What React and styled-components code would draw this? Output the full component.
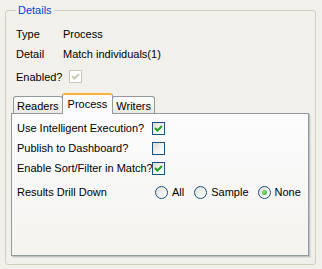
import React, { useState } from 'react';
import styled, { createGlobalStyle } from 'styled-components';

const GlobalStyle = createGlobalStyle`
  html, body {
    margin: 0;
    padding: 0;
    background: #f1f0ea;
  }
  body {
    font-family: "Liberation Sans", Arial, sans-serif;
    font-size: 11px;
    color: #000;
  }
`;

const Page = styled.div`
  width: 322px;
  height: 269px;
  box-sizing: border-box;
  padding: 4px 6px 3px 5px;
`;

const GroupBox = styled.fieldset`
  margin: 0;
  min-width: 0;
  height: 261px;
  box-sizing: border-box;
  border: 1px solid #d0d0bf;
  border-radius: 3px;
  padding: 11px 3px 5px 5px;
  display: flex;
  flex-direction: column;
`;

const Legend = styled.legend`
  color: #0046d5;
  padding: 0 2px;
  margin-left: 5px;
  line-height: 13px;
`;

const InfoGrid = styled.div`
  display: grid;
  grid-template-columns: 47px auto;
  row-gap: 7px;
  padding-left: 5px;
  line-height: 13px;
`;

const EnabledRow = styled.div`
  display: flex;
  align-items: center;
  padding-left: 5px;
  margin-top: 9px;
  height: 13px;
`;

const EnabledLabel = styled.span`
  width: 53px;
`;

const Box = styled.span`
  width: 13px;
  height: 13px;
  box-sizing: border-box;
  display: inline-flex;
  align-items: center;
  justify-content: center;
  flex-shrink: 0;
  border: 1px solid ${(p) => (p.disabled ? '#cac8bb' : '#1c5180')};
  background: ${(p) =>
    p.disabled ? '#ffffff' : 'linear-gradient(135deg, #dcdcd7 0%, #f4f4f0 60%, #ffffff 100%)'};
`;

const Tabs = styled.div`
  margin-top: 10px;
  display: flex;
  flex-direction: column;
  flex: 1;
`;

const TabStrip = styled.div`
  display: flex;
  align-items: flex-end;
  height: 20px;
  padding-left: 2px;
  position: relative;
  z-index: 1;
`;

const Tab = styled.div`
  box-sizing: border-box;
  height: ${(p) => (p.active ? '21px' : '17px')};
  padding: ${(p) => (p.active ? '0 5px 2px' : '1px 3px 0')};
  margin: ${(p) => (p.active ? '0 -1px -1px -1px' : '0')};
  display: flex;
  align-items: center;
  border: 1px solid #919b9c;
  border-bottom: none;
  border-top: ${(p) => (p.active ? '2px solid #f9b33c' : '1px solid #919b9c')};
  border-radius: 3px 3px 0 0;
  background: ${(p) =>
    p.active ? '#fcfcfe' : 'linear-gradient(#ffffff, #f3f3ef 60%, #e9e8e2)'};
  cursor: pointer;
  position: relative;
  z-index: ${(p) => (p.active ? 2 : 1)};
`;

const Panel = styled.div`
  flex: 1;
  border: 1px solid #919b9c;
  box-shadow: 1px 1px 0 #c0c4c5, 2px 2px 0 #dcddd8;
  margin-right: 3px;
  margin-bottom: 3px;
  background: linear-gradient(#fcfcfe, #f4f3ee);
  padding: 4px 0 0 5px;
  display: flex;
  flex-direction: column;
`;

const OptionRow = styled.div`
  display: flex;
  align-items: center;
  height: 20px;
  margin-top: ${(p) => p.top || 0}px;
`;

const OptionLabel = styled.span`
  width: ${(p) => p.w || 135}px;
  line-height: 13px;
  white-space: nowrap;
`;

const RadioGroup = styled.div`
  display: flex;
  align-items: center;
`;

const RadioItem = styled.label`
  display: flex;
  align-items: center;
  gap: 4px;
  margin-right: ${(p) => p.gap}px;
`;

const Circle = styled.span`
  width: 13px;
  height: 13px;
  box-sizing: border-box;
  border-radius: 50%;
  border: 1px solid #1c5180;
  background: linear-gradient(135deg, #dcdcd7 0%, #f4f4f0 60%, #ffffff 100%);
  display: inline-flex;
  align-items: center;
  justify-content: center;
`;

const Dot = styled.span`
  width: 5px;
  height: 5px;
  border-radius: 50%;
  background: radial-gradient(circle at 40% 40%, #8ae08a, #21a121);
`;

const Check = ({ color }) => (
  <svg width="9" height="9" viewBox="0 0 9 9">
    <path d="M1 4 L3.5 6.5 L8 2" fill="none" stroke={color} strokeWidth="2" />
  </svg>
);

const CheckBox = ({ checked, disabled }) => (
  <Box disabled={disabled}>
    {checked && <Check color={disabled ? '#cac8bb' : '#21a121'} />}
  </Box>
);

const Radio = ({ checked, label, gap }) => (
  <RadioItem gap={gap}>
    <Circle>{checked && <Dot />}</Circle>
    {label}
  </RadioItem>
);

const options = [
  { label: 'Use Intelligent Execution?', checked: true },
  { label: 'Publish to Dashboard?', checked: false },
  { label: 'Enable Sort/Filter in Match?', checked: true },
];

export default function App() {
  const [tab, setTab] = useState('Process');

  return (
    <Page>
      <GlobalStyle />
      <GroupBox>
        <Legend>Details</Legend>
        <InfoGrid>
          <span>Type</span>
          <span>Process</span>
          <span>Detail</span>
          <span>Match individuals(1)</span>
        </InfoGrid>
        <EnabledRow>
          <EnabledLabel>Enabled?</EnabledLabel>
          <CheckBox checked disabled />
        </EnabledRow>
        <Tabs>
          <TabStrip>
            {['Readers', 'Process', 'Writers'].map((t) => (
              <Tab key={t} active={tab === t} onClick={() => setTab(t)}>
                {t}
              </Tab>
            ))}
          </TabStrip>
          <Panel>
            {options.map((o) => (
              <OptionRow key={o.label}>
                <OptionLabel>{o.label}</OptionLabel>
                <CheckBox checked={o.checked} />
              </OptionRow>
            ))}
            <OptionRow top={4}>
              <OptionLabel w={138}>Results Drill Down</OptionLabel>
              <RadioGroup>
                <Radio label="All" gap={10} />
                <Radio label="Sample" gap={9} />
                <Radio label="None" checked gap={0} />
              </RadioGroup>
            </OptionRow>
          </Panel>
        </Tabs>
      </GroupBox>
    </Page>
  );
}
